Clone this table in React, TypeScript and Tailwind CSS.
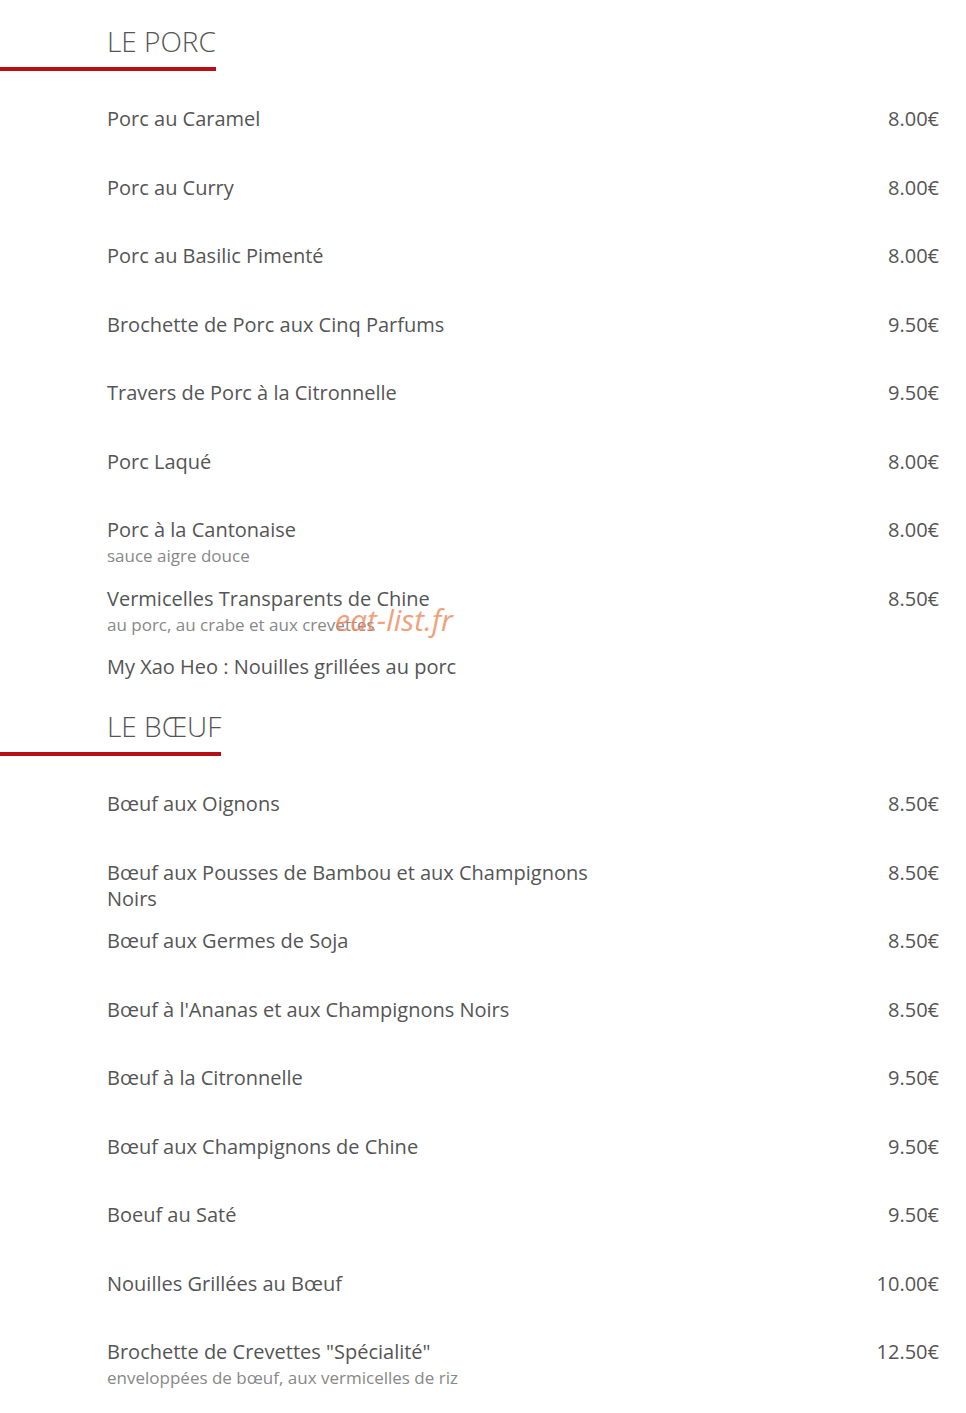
import React from "react";

type Item = { name: string; desc?: string; price?: string };

const porc: Item[] = [
  { name: "Porc au Caramel", price: "8.00€" },
  { name: "Porc au Curry", price: "8.00€" },
  { name: "Porc au Basilic Pimenté", price: "8.00€" },
  { name: "Brochette de Porc aux Cinq Parfums", price: "9.50€" },
  { name: "Travers de Porc à la Citronnelle", price: "9.50€" },
  { name: "Porc Laqué", price: "8.00€" },
  { name: "Porc à la Cantonaise", desc: "sauce aigre douce", price: "8.00€" },
  { name: "Vermicelles Transparents de Chine", desc: "au porc, au crabe et aux crevettes", price: "8.50€" },
];

const boeuf: Item[] = [
  { name: "Bœuf aux Oignons", price: "8.50€" },
  { name: "Bœuf aux Pousses de Bambou et aux Champignons Noirs", price: "8.50€" },
  { name: "Bœuf aux Germes de Soja", price: "8.50€" },
  { name: "Bœuf à l'Ananas et aux Champignons Noirs", price: "8.50€" },
  { name: "Bœuf à la Citronnelle", price: "9.50€" },
  { name: "Bœuf aux Champignons de Chine", price: "9.50€" },
  { name: "Boeuf au Saté", price: "9.50€" },
  { name: "Nouilles Grillées au Bœuf", price: "10.00€" },
  { name: "Brochette de Crevettes \"Spécialité\"", desc: "enveloppées de bœuf, aux vermicelles de riz", price: "12.50€" },
];

function Header({ title }: { title: string }) {
  return (
    <div className="pt-[23px]">
      <div className="inline-block pl-[107px] pb-[8px] border-b-[4px] border-[#b70e16]">
        <div className="text-[28px] leading-[36px] font-light text-[#555]">{title}</div>
      </div>
    </div>
  );
}

function Row({ item }: { item: Item }) {
  return (
    <div className="h-[68.5px] flex justify-between pl-[107px] pr-[27px]">
      <div className="w-[500px]">
        <div className="text-[20px] leading-[26px] text-[#555]">{item.name}</div>
        {item.desc && <div className="text-[17px] leading-[26px] text-[#888]">{item.desc}</div>}
      </div>
      {item.price && <div className="text-[20px] leading-[26px] text-[#555]">{item.price}</div>}
    </div>
  );
}

export default function App() {
  return (
    <div className="relative w-[966px] min-h-[1413px] bg-white" style={{ fontFamily: '"Open Sans", "Noto Sans", sans-serif' }}>
      <Header title="LE PORC" />
      <div className="pt-[35px]">
        {porc.map((it) => (
          <Row key={it.name} item={it} />
        ))}
        <div className="pl-[107px] pb-[5px] text-[20px] leading-[26px] text-[#555]">My Xao Heo : Nouilles grillées au porc</div>
      </div>
      <Header title="LE BŒUF" />
      <div className="pt-[35px]">
        {boeuf.map((it) => (
          <Row key={it.name} item={it} />
        ))}
      </div>
      <div className="absolute left-[335px] top-[600px] text-[30px] leading-[40px] italic text-[#f08a5d] opacity-80 pointer-events-none">
        eat-list.fr
      </div>
    </div>
  );
}
